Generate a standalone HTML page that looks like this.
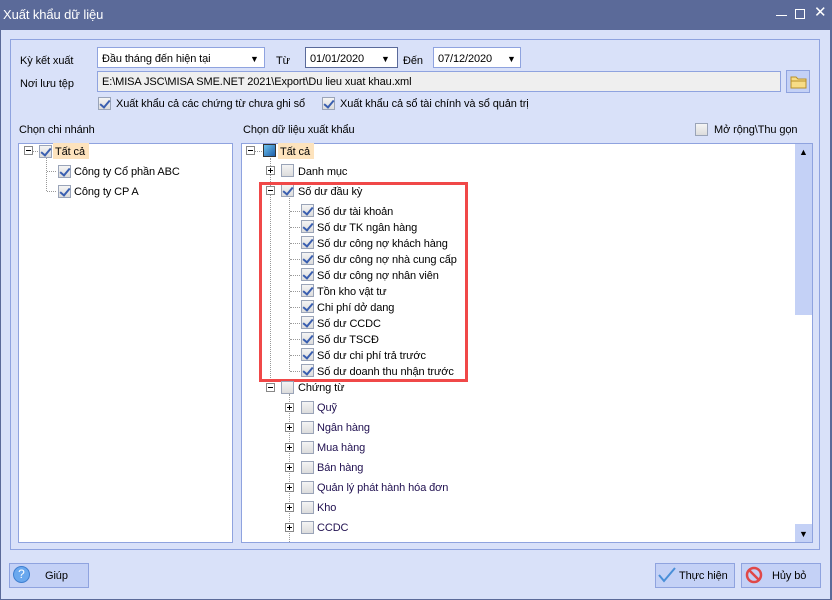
<!DOCTYPE html><html><head><meta charset="utf-8"><style>
*{margin:0;padding:0;box-sizing:border-box}
body{width:832px;height:600px;position:relative;overflow:hidden;font-family:"Liberation Sans",sans-serif;font-size:11px;color:#000;background:#5b6a99}
.a{position:absolute}
.t{position:absolute;white-space:nowrap;line-height:14px;letter-spacing:-0.1px;padding-top:1px}
.cb{position:absolute;width:13px;height:13px;border:1px solid #9aa4b8;background:linear-gradient(#f4f4f4,#dcdcdc)}
.cb.c::after{content:"";position:absolute;left:3px;top:0px;width:4px;height:8px;border:solid #3a5fb0;border-width:0 2px 2px 0;transform:rotate(40deg)}
.ex{position:absolute;width:9px;height:9px;border:1px solid #888;background:#fff}
.ex::before{content:"";position:absolute;left:1px;top:3px;width:5px;height:1px;background:#000}
.ex.p::after{content:"";position:absolute;left:3px;top:1px;width:1px;height:5px;background:#000}
.dl{position:absolute;border-left:1px dotted #999}
.dh{position:absolute;border-top:1px dotted #999;width:7px}
.btn{position:absolute;background:#c4d1f6;border:1px solid #8fa3df;height:25px}
</style></head><body>
<div class="a" style="left:0;top:0;width:832px;height:30px;background:#5b6a99"></div>
<div class="t" style="left:3px;top:7px;color:#fff;font-size:13px">Xuất khẩu dữ liệu</div>
<div class="a" style="left:776px;top:15px;width:11px;height:1px;background:#fff"></div>
<div class="a" style="left:795px;top:9px;width:10px;height:10px;border:1px solid #fff"></div>
<div class="t" style="left:814px;top:5px;color:#fff;font-size:15px">✕</div>
<div class="a" style="left:1px;top:30px;width:829px;height:569px;background:#d9e1f9"></div>
<div class="a" style="left:10px;top:39px;width:810px;height:511px;border:1px solid #8fa3df"></div>

<div class="t" style="left:20px;top:53px">Kỳ kết xuất</div>
<div class="a" style="left:97px;top:47px;width:168px;height:21px;background:#fff;border:1px solid #8fa3df"></div>
<div class="t" style="left:102px;top:51px">Đầu tháng đến hiện tại</div>
<div class="t" style="left:250px;top:51px;font-size:9px">▼</div>
<div class="t" style="left:276px;top:53px">Từ</div>
<div class="a" style="left:305px;top:47px;width:93px;height:21px;background:#fff;border:1px solid #5a6a9a"></div>
<div class="t" style="left:310px;top:51px">01/01/2020</div>
<div class="t" style="left:381px;top:51px;font-size:9px">▼</div>
<div class="t" style="left:403px;top:53px">Đến</div>
<div class="a" style="left:433px;top:47px;width:88px;height:21px;background:#fff;border:1px solid #8fa3df"></div>
<div class="t" style="left:438px;top:51px">07/12/2020</div>
<div class="t" style="left:507px;top:51px;font-size:9px">▼</div>

<div class="t" style="left:20px;top:76px">Nơi lưu tệp</div>
<div class="a" style="left:97px;top:71px;width:684px;height:21px;background:#efefef;border:1px solid #8fa3df"></div>
<div class="t" style="left:102px;top:74px">E:\MISA JSC\MISA SME.NET 2021\Export\Du lieu xuat khau.xml</div>
<div class="a" style="left:786px;top:70px;width:24px;height:23px;background:#c4d1f6;border:1px solid #8fa3df"></div>
<svg class="a" style="left:790px;top:75px" width="17" height="14"><path d="M1 2h5l2 2h8v9H1z" fill="#f7dc86" stroke="#b8902a"/><path d="M1 6h15" stroke="#b8902a"/></svg>

<div class="cb c" style="left:98px;top:97px"></div>
<div class="t" style="left:116px;top:96px">Xuất khẩu cả các chứng từ chưa ghi sổ</div>
<div class="cb c" style="left:322px;top:97px"></div>
<div class="t" style="left:340px;top:96px">Xuất khẩu cả sổ tài chính và sổ quản trị</div>

<div class="t" style="left:19px;top:122px">Chọn chi nhánh</div>
<div class="t" style="left:243px;top:122px">Chọn dữ liệu xuất khẩu</div>
<div class="cb" style="left:695px;top:123px"></div>
<div class="t" style="left:714px;top:122px">Mở rộng\Thu gọn</div>

<div class="a" style="left:18px;top:143px;width:215px;height:400px;background:#fff;border:1px solid #8fa3df"></div>
<div class="ex" style="left:24px;top:146px"></div>
<div class="dh" style="left:33px;top:151px;width:5px"></div>
<div class="cb c" style="left:39px;top:145px"></div>
<div class="a" style="left:53px;top:143px;width:36px;height:16px;background:#fde3bd"></div>
<div class="t" style="left:55px;top:144px">Tất cả</div>
<div class="dl" style="left:46px;top:158px;height:33px"></div>
<div class="dh" style="left:47px;top:171px;width:9px"></div>
<div class="dh" style="left:47px;top:191px;width:9px"></div>
<div class="cb c" style="left:58px;top:165px"></div>
<div class="t" style="left:74px;top:164px">Công ty Cổ phần ABC</div>
<div class="cb c" style="left:58px;top:185px"></div>
<div class="t" style="left:74px;top:184px">Công ty CP A</div>

<div class="a" style="left:241px;top:143px;width:572px;height:400px;background:#fff;border:1px solid #8fa3df"></div>
<div class="a" style="left:795px;top:144px;width:17px;height:171px;background:#c4d1f6"></div>
<div class="t" style="left:799px;top:144px;font-size:9px">▲</div>
<div class="a" style="left:795px;top:524px;width:17px;height:18px;background:#c4d1f6"></div>
<div class="t" style="left:799px;top:526px;font-size:9px">▼</div>

<div class="ex" style="left:246px;top:146px"></div>
<div class="dh" style="left:255px;top:151px;width:7px"></div>
<div class="a" style="left:263px;top:144px;width:13px;height:13px;border:1px solid #333;background:linear-gradient(135deg,#6fc3ee,#1e5ea8)"></div>
<div class="a" style="left:278px;top:143px;width:36px;height:16px;background:#fde3bd"></div>
<div class="t" style="left:280px;top:144px">Tất cả</div>
<div class="dl" style="left:270px;top:158px;height:232px"></div>
<div class="ex p" style="left:266px;top:166px"></div>
<div class="cb" style="left:281px;top:164px"></div>
<div class="t" style="left:298px;top:164px">Danh mục</div>
<div class="ex" style="left:266px;top:186px"></div>
<div class="cb c" style="left:281px;top:184px"></div>
<div class="t" style="left:298px;top:184px">Số dư đầu kỳ</div>
<div class="dl" style="left:289px;top:198px;height:173px"></div>
<div class="a" style="left:259px;top:182px;width:209px;height:200px;border:3px solid #f04848"></div>

<div class="ex" style="left:266px;top:383px"></div>
<div class="cb" style="left:281px;top:381px"></div>
<div class="t" style="left:298px;top:380px">Chứng từ</div>
<div class="dl" style="left:289px;top:394px;height:148px"></div>

<div class="dh" style="left:290px;top:211px;width:10px"></div><div class="cb c" style="left:301px;top:204px"></div><div class="t" style="left:317px;top:204px">Số dư tài khoản</div>
<div class="dh" style="left:290px;top:227px;width:10px"></div><div class="cb c" style="left:301px;top:220px"></div><div class="t" style="left:317px;top:220px">Số dư TK ngân hàng</div>
<div class="dh" style="left:290px;top:243px;width:10px"></div><div class="cb c" style="left:301px;top:236px"></div><div class="t" style="left:317px;top:236px">Số dư công nợ khách hàng</div>
<div class="dh" style="left:290px;top:259px;width:10px"></div><div class="cb c" style="left:301px;top:252px"></div><div class="t" style="left:317px;top:252px">Số dư công nợ nhà cung cấp</div>
<div class="dh" style="left:290px;top:275px;width:10px"></div><div class="cb c" style="left:301px;top:268px"></div><div class="t" style="left:317px;top:268px">Số dư công nợ nhân viên</div>
<div class="dh" style="left:290px;top:291px;width:10px"></div><div class="cb c" style="left:301px;top:284px"></div><div class="t" style="left:317px;top:284px">Tồn kho vật tư</div>
<div class="dh" style="left:290px;top:307px;width:10px"></div><div class="cb c" style="left:301px;top:300px"></div><div class="t" style="left:317px;top:300px">Chi phí dở dang</div>
<div class="dh" style="left:290px;top:323px;width:10px"></div><div class="cb c" style="left:301px;top:316px"></div><div class="t" style="left:317px;top:316px">Số dư CCDC</div>
<div class="dh" style="left:290px;top:339px;width:10px"></div><div class="cb c" style="left:301px;top:332px"></div><div class="t" style="left:317px;top:332px">Số dư TSCĐ</div>
<div class="dh" style="left:290px;top:355px;width:10px"></div><div class="cb c" style="left:301px;top:348px"></div><div class="t" style="left:317px;top:348px">Số dư chi phí trả trước</div>
<div class="dh" style="left:290px;top:371px;width:10px"></div><div class="cb c" style="left:301px;top:364px"></div><div class="t" style="left:317px;top:364px">Số dư doanh thu nhận trước</div>

<div class="ex p" style="left:285px;top:403px"></div><div class="cb" style="left:301px;top:401px"></div><div class="t" style="left:317px;top:400px;color:#201050">Quỹ</div>
<div class="ex p" style="left:285px;top:423px"></div><div class="cb" style="left:301px;top:421px"></div><div class="t" style="left:317px;top:420px;color:#201050">Ngân hàng</div>
<div class="ex p" style="left:285px;top:443px"></div><div class="cb" style="left:301px;top:441px"></div><div class="t" style="left:317px;top:440px;color:#201050">Mua hàng</div>
<div class="ex p" style="left:285px;top:463px"></div><div class="cb" style="left:301px;top:461px"></div><div class="t" style="left:317px;top:460px;color:#201050">Bán hàng</div>
<div class="ex p" style="left:285px;top:483px"></div><div class="cb" style="left:301px;top:481px"></div><div class="t" style="left:317px;top:480px;color:#201050">Quản lý phát hành hóa đơn</div>
<div class="ex p" style="left:285px;top:503px"></div><div class="cb" style="left:301px;top:501px"></div><div class="t" style="left:317px;top:500px;color:#201050">Kho</div>
<div class="ex p" style="left:285px;top:523px"></div><div class="cb" style="left:301px;top:521px"></div><div class="t" style="left:317px;top:520px;color:#201050">CCDC</div>

<div class="btn" style="left:9px;top:563px;width:80px"></div>
<div class="a" style="left:13px;top:566px;width:17px;height:17px;border-radius:50%;background:#6aa8ee;border:1px solid #3f7fd0;color:#fff;font-size:12px;text-align:center;line-height:15px">?</div>
<div class="t" style="left:45px;top:568px">Giúp</div>
<div class="btn" style="left:655px;top:563px;width:80px"></div>
<svg class="a" style="left:658px;top:567px" width="18" height="16"><path d="M1 8l5 6L17 1" fill="none" stroke="#4a8fd8" stroke-width="2"/></svg>
<div class="t" style="left:679px;top:568px">Thực hiện</div>
<div class="btn" style="left:741px;top:563px;width:80px"></div>
<svg class="a" style="left:745px;top:566px" width="18" height="18"><circle cx="9" cy="9" r="7" fill="none" stroke="#e04848" stroke-width="2.5"/><path d="M4 4l10 10" stroke="#e04848" stroke-width="2.5"/></svg>
<div class="t" style="left:772px;top:568px">Hủy bỏ</div>
</body></html>
